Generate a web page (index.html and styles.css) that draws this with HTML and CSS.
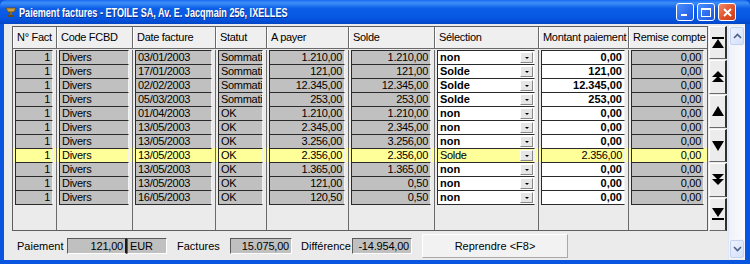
FILE: index.html
```html
<!DOCTYPE html>
<html lang="fr">
<head>
    <meta charset="UTF-8">
    <title>Paiement factures</title>
    <link rel="stylesheet" href="styles.css">
</head>
<body>
<div class="window">
    <div class="titlebar">
        <svg class="app-icon" width="12" height="12" viewBox="0 0 12 12">
            <path d="M1 2 H11 L9 6 H3 Z" fill="#c8a040" stroke="#6b4a10" stroke-width="0.8"/>
            <rect x="5" y="6" width="2" height="3" fill="#8a6420"/>
            <rect x="3" y="9" width="6" height="2" fill="#6b4a10"/>
        </svg>
        <div class="title-wrap"><span class="title">Paiement factures - ETOILE SA, Av. E. Jacqmain 256, IXELLES</span></div>
        <div class="win-btns">
            <div class="win-btn"><span class="min-glyph"></span></div>
            <div class="win-btn"><span class="max-glyph"></span></div>
            <div class="win-btn close">
                <svg width="11" height="11" viewBox="0 0 11 11"><path d="M2 2 L9 9 M9 2 L2 9" stroke="#fff" stroke-width="2"/></svg>
            </div>
        </div>
    </div>

    <div class="client">
        <div class="main">
            <div class="grid-area">
                <div class="grid">
                    <div class="row head">
                        <div class="col">N° Fact</div>
                        <div class="col">Code FCBD</div>
                        <div class="col">Date facture</div>
                        <div class="col">Statut</div>
                        <div class="col">A payer</div>
                        <div class="col">Solde</div>
                        <div class="col">Sélection</div>
                        <div class="col">Montant paiement</div>
                        <div class="col">Remise compte</div>
                    </div>

                    <div class="row">
                        <div class="col"><div class="cell num">1</div></div>
                        <div class="col"><div class="cell">Divers</div></div>
                        <div class="col"><div class="cell">03/01/2003</div></div>
                        <div class="col"><div class="cell">Sommation</div></div>
                        <div class="col"><div class="cell num">1.210,00</div></div>
                        <div class="col"><div class="cell num">1.210,00</div></div>
                        <div class="col"><div class="cell select"><span>non</span><i class="drop"></i></div></div>
                        <div class="col"><div class="cell edit num">0,00</div></div>
                        <div class="col"><div class="cell num">0,00</div></div>
                    </div>
                    <div class="row">
                        <div class="col"><div class="cell num">1</div></div>
                        <div class="col"><div class="cell">Divers</div></div>
                        <div class="col"><div class="cell">17/01/2003</div></div>
                        <div class="col"><div class="cell">Sommation</div></div>
                        <div class="col"><div class="cell num">121,00</div></div>
                        <div class="col"><div class="cell num">121,00</div></div>
                        <div class="col"><div class="cell select"><span>Solde</span><i class="drop"></i></div></div>
                        <div class="col"><div class="cell edit num">121,00</div></div>
                        <div class="col"><div class="cell num">0,00</div></div>
                    </div>
                    <div class="row">
                        <div class="col"><div class="cell num">1</div></div>
                        <div class="col"><div class="cell">Divers</div></div>
                        <div class="col"><div class="cell">02/02/2003</div></div>
                        <div class="col"><div class="cell">Sommation</div></div>
                        <div class="col"><div class="cell num">12.345,00</div></div>
                        <div class="col"><div class="cell num">12.345,00</div></div>
                        <div class="col"><div class="cell select"><span>Solde</span><i class="drop"></i></div></div>
                        <div class="col"><div class="cell edit num">12.345,00</div></div>
                        <div class="col"><div class="cell num">0,00</div></div>
                    </div>
                    <div class="row">
                        <div class="col"><div class="cell num">1</div></div>
                        <div class="col"><div class="cell">Divers</div></div>
                        <div class="col"><div class="cell">05/03/2003</div></div>
                        <div class="col"><div class="cell">Sommation</div></div>
                        <div class="col"><div class="cell num">253,00</div></div>
                        <div class="col"><div class="cell num">253,00</div></div>
                        <div class="col"><div class="cell select"><span>Solde</span><i class="drop"></i></div></div>
                        <div class="col"><div class="cell edit num">253,00</div></div>
                        <div class="col"><div class="cell num">0,00</div></div>
                    </div>
                    <div class="row">
                        <div class="col"><div class="cell num">1</div></div>
                        <div class="col"><div class="cell">Divers</div></div>
                        <div class="col"><div class="cell">01/04/2003</div></div>
                        <div class="col"><div class="cell">OK</div></div>
                        <div class="col"><div class="cell num">1.210,00</div></div>
                        <div class="col"><div class="cell num">1.210,00</div></div>
                        <div class="col"><div class="cell select"><span>non</span><i class="drop"></i></div></div>
                        <div class="col"><div class="cell edit num">0,00</div></div>
                        <div class="col"><div class="cell num">0,00</div></div>
                    </div>
                    <div class="row">
                        <div class="col"><div class="cell num">1</div></div>
                        <div class="col"><div class="cell">Divers</div></div>
                        <div class="col"><div class="cell">13/05/2003</div></div>
                        <div class="col"><div class="cell">OK</div></div>
                        <div class="col"><div class="cell num">2.345,00</div></div>
                        <div class="col"><div class="cell num">2.345,00</div></div>
                        <div class="col"><div class="cell select"><span>non</span><i class="drop"></i></div></div>
                        <div class="col"><div class="cell edit num">0,00</div></div>
                        <div class="col"><div class="cell num">0,00</div></div>
                    </div>
                    <div class="row">
                        <div class="col"><div class="cell num">1</div></div>
                        <div class="col"><div class="cell">Divers</div></div>
                        <div class="col"><div class="cell">13/05/2003</div></div>
                        <div class="col"><div class="cell">OK</div></div>
                        <div class="col"><div class="cell num">3.256,00</div></div>
                        <div class="col"><div class="cell num">3.256,00</div></div>
                        <div class="col"><div class="cell select"><span>non</span><i class="drop"></i></div></div>
                        <div class="col"><div class="cell edit num">0,00</div></div>
                        <div class="col"><div class="cell num">0,00</div></div>
                    </div>
                    <div class="row current">
                        <div class="col"><div class="cell num">1</div></div>
                        <div class="col"><div class="cell">Divers</div></div>
                        <div class="col"><div class="cell">13/05/2003</div></div>
                        <div class="col"><div class="cell">OK</div></div>
                        <div class="col"><div class="cell num">2.356,00</div></div>
                        <div class="col"><div class="cell num">2.356,00</div></div>
                        <div class="col"><div class="cell select"><span>Solde</span><i class="drop"></i></div></div>
                        <div class="col"><div class="cell edit num">2.356,00</div></div>
                        <div class="col"><div class="cell num">0,00</div></div>
                    </div>
                    <div class="row">
                        <div class="col"><div class="cell num">1</div></div>
                        <div class="col"><div class="cell">Divers</div></div>
                        <div class="col"><div class="cell">13/05/2003</div></div>
                        <div class="col"><div class="cell">OK</div></div>
                        <div class="col"><div class="cell num">1.365,00</div></div>
                        <div class="col"><div class="cell num">1.365,00</div></div>
                        <div class="col"><div class="cell select"><span>non</span><i class="drop"></i></div></div>
                        <div class="col"><div class="cell edit num">0,00</div></div>
                        <div class="col"><div class="cell num">0,00</div></div>
                    </div>
                    <div class="row">
                        <div class="col"><div class="cell num">1</div></div>
                        <div class="col"><div class="cell">Divers</div></div>
                        <div class="col"><div class="cell">13/05/2003</div></div>
                        <div class="col"><div class="cell">OK</div></div>
                        <div class="col"><div class="cell num">121,00</div></div>
                        <div class="col"><div class="cell num">0,50</div></div>
                        <div class="col"><div class="cell select"><span>non</span><i class="drop"></i></div></div>
                        <div class="col"><div class="cell edit num">0,00</div></div>
                        <div class="col"><div class="cell num">0,00</div></div>
                    </div>
                    <div class="row">
                        <div class="col"><div class="cell num">1</div></div>
                        <div class="col"><div class="cell">Divers</div></div>
                        <div class="col"><div class="cell">16/05/2003</div></div>
                        <div class="col"><div class="cell">OK</div></div>
                        <div class="col"><div class="cell num">120,50</div></div>
                        <div class="col"><div class="cell num">0,50</div></div>
                        <div class="col"><div class="cell select"><span>non</span><i class="drop"></i></div></div>
                        <div class="col"><div class="cell edit num">0,00</div></div>
                        <div class="col"><div class="cell num">0,00</div></div>
                    </div>

                    <div class="row filler">
                        <div class="col"></div><div class="col"></div><div class="col"></div>
                        <div class="col"></div><div class="col"></div><div class="col"></div>
                        <div class="col"></div><div class="col"></div><div class="col"></div>
                    </div>
                </div>

                <div class="nav">
                    <div class="nav-btn">
                        <svg width="12" height="12" viewBox="0 0 12 12"><rect x="0" y="0" width="12" height="2"/><path d="M6 2 L12 11 H0 Z"/></svg>
                    </div>
                    <div class="nav-btn">
                        <svg width="12" height="12" viewBox="0 0 12 12"><path d="M6 0 L12 6 H0 Z"/><path d="M6 5 L12 11 H0 Z"/></svg>
                    </div>
                    <div class="nav-btn">
                        <svg width="12" height="10" viewBox="0 0 12 10"><path d="M6 0 L12 10 H0 Z"/></svg>
                    </div>
                    <div class="nav-btn">
                        <svg width="12" height="10" viewBox="0 0 12 10"><path d="M0 0 H12 L6 10 Z"/></svg>
                    </div>
                    <div class="nav-btn">
                        <svg width="12" height="12" viewBox="0 0 12 12"><path d="M0 0 H12 L6 6 Z"/><path d="M0 5 H12 L6 11 Z"/></svg>
                    </div>
                    <div class="nav-btn">
                        <svg width="12" height="12" viewBox="0 0 12 12"><path d="M0 0 H12 L6 9 Z"/><rect x="0" y="10" width="12" height="2"/></svg>
                    </div>
                </div>
            </div>

            <div class="footer">
                <span class="label lbl-paiement">Paiement</span>
                <div class="box num w-paiement">121,00</div>
                <div class="box w-eur">EUR</div>
                <span class="label lbl-factures">Factures</span>
                <div class="box num w-factures">15.075,00</div>
                <span class="label lbl-diff">Différence</span>
                <div class="box num w-diff">-14.954,00</div>
                <button class="action-btn">Reprendre &lt;F8&gt;</button>
            </div>
        </div>

        <div class="vscroll">
            <div class="sb-btn">
                <svg width="9" height="6" viewBox="0 0 9 6"><path d="M1 5 L4.5 1.5 L8 5" fill="none" stroke="#4d6185" stroke-width="1.6"/></svg>
            </div>
            <div class="sb-track"></div>
            <div class="sb-btn">
                <svg width="9" height="6" viewBox="0 0 9 6"><path d="M1 1 L4.5 4.5 L8 1" fill="none" stroke="#4d6185" stroke-width="1.6"/></svg>
            </div>
        </div>
    </div>
</div>
</body>
</html>
```

FILE: styles.css
```css
body {
    margin: 0;
    font-family: 'Liberation Sans', Arial, sans-serif;
    font-size: 11px;
    color: #000;
}
.window {
    width: 750px;
    height: 264px;
    box-sizing: border-box;
    display: flex;
    flex-direction: column;
    background: #0a55e0;
    padding: 0 5px 4px 4px;
}
.titlebar {
    height: 24px;
    margin: 0 -5px 0 -4px;
    padding: 0 14px 0 5px;
    display: flex;
    align-items: center;
    background: linear-gradient(#1a6af2 0%, #3d8ff8 12%, #0c5ee8 35%, #0656e2 75%, #0447c8 100%);
    border-radius: 6px 6px 0 0;
}
.app-icon {
    flex: none;
    margin-right: 2px;
}
.title-wrap {
    flex: 1;
    overflow: hidden;
}
.title {
    display: inline-block;
    color: #fff;
    font-weight: bold;
    font-size: 13px;
    text-shadow: 1px 1px 0 #0a2a8a;
    white-space: nowrap;
    transform: scaleX(0.7);
    transform-origin: left center;
}
.win-btns {
    display: flex;
    gap: 3px;
}
.win-btn {
    width: 16px;
    height: 16px;
    border: 1px solid #fff;
    border-radius: 3px;
    background: linear-gradient(135deg, #4d8ffc, #2b6cf0 60%, #1c56d8);
    display: flex;
    align-items: flex-end;
    justify-content: center;
}
.win-btn.close {
    background: linear-gradient(135deg, #f08a6a, #e0502a 55%, #c83a18);
    align-items: center;
}
.min-glyph {
    width: 6px;
    height: 2px;
    background: #fff;
    margin-bottom: 4px;
    margin-right: 3px;
}
.max-glyph {
    width: 8px;
    height: 6px;
    border: 1px solid #fff;
    border-top-width: 2px;
    margin-bottom: 3px;
}

.client {
    flex: 1;
    display: flex;
    background: #ebebeb;
    min-height: 0;
}
.main {
    width: 724px;
    padding: 2px 1px 0 8px;
    box-sizing: border-box;
    display: flex;
    flex-direction: column;
}
.grid-area {
    display: flex;
    height: 205px;
}
.grid {
    width: 696px;
    box-sizing: border-box;
    border: 1px solid #5f5f5f;
    display: flex;
    flex-direction: column;
    overflow: hidden;
}
.row {
    display: grid;
    grid-template-columns: 44px 76px 83px 51px 82px 86px 104px 90px 78px;
    height: 14px;
    flex: none;
}
.col {
    border-right: 1px solid #6a6a6a;
    padding: 0 3px 0 2px;
    min-width: 0;
}
.col:last-child {
    border-right: 0;
}
.head {
    height: 21px;
    border-bottom: 1px solid #6a6a6a;
    background: #efefef;
}
.head .col {
    padding: 0 3px 0 4px;
    line-height: 20px;
    letter-spacing: -0.3px;
    white-space: nowrap;
    overflow: hidden;
    box-shadow: inset 1px 0 #fff;
}
.head + .row {
    margin-top: 1px;
}
.cell {
    height: 15px;
    box-sizing: border-box;
    border: 1px solid #2a2a2a;
    border-right-color: #f2f2f2;
    background: #c0c0c0;
    line-height: 13px;
    padding: 0 2px;
    letter-spacing: -0.3px;
    white-space: nowrap;
    overflow: hidden;
}
.num {
    text-align: right;
}
.cell.edit,
.cell.select {
    background: #fff;
    font-weight: bold;
    letter-spacing: 0;
}
.cell.select {
    display: flex;
    justify-content: space-between;
    padding-right: 0;
}
.drop {
    width: 13px;
    height: 11px;
    margin-right: 1px;
    background: #e6e6e6;
    border: 1px solid #fff;
    border-right-color: #888;
    border-bottom-color: #888;
    box-sizing: border-box;
    display: flex;
    align-items: center;
    justify-content: center;
    align-self: center;
}
.drop::after {
    content: "";
    border-left: 2px solid transparent;
    border-right: 2px solid transparent;
    border-top: 2px solid #000;
}
.current {
    background: #ffff99;
}
.current .cell,
.current .cell.edit,
.current .cell.select {
    background: #ffff99;
    font-weight: normal;
    letter-spacing: -0.3px;
}
.filler {
    flex: 1;
    height: auto;
}

.nav {
    width: 18px;
    margin-left: 1px;
    display: flex;
    flex-direction: column;
    gap: 1px;
}
.nav-btn {
    flex: 1;
    background: #ececec;
    border: 1px solid #fff;
    border-right: 2px solid #303030;
    border-bottom: 1px solid #6a6a6a;
    display: flex;
    align-items: center;
    justify-content: center;
}
.nav-btn svg {
    fill: #000;
}

.footer {
    flex: 1;
    display: flex;
    align-items: center;
}
.label {
    white-space: nowrap;
}
.lbl-paiement { margin-left: 5px; width: 50px; }
.lbl-factures { margin-left: 10px; width: 53px; }
.lbl-diff { margin-left: 9px; width: 51px; }
.box {
    height: 16px;
    box-sizing: border-box;
    background: #c0c0c0;
    border: 1px solid #5a5a5a;
    border-right-color: #fff;
    border-bottom-color: #fff;
    line-height: 14px;
    padding: 0 2px;
    letter-spacing: -0.2px;
}
.w-paiement { width: 60px; border-right: 2px solid #1a1a1a; }
.w-eur { width: 40px; }
.w-factures { width: 62px; }
.w-diff { width: 60px; }
.action-btn {
    margin-left: 10px;
    width: 146px;
    height: 24px;
    font-family: inherit;
    font-size: 11px;
    background: #f2f2f2;
    border: 1px solid #fff;
    border-right-color: #a8a8a8;
    border-bottom-color: #a8a8a8;
    padding: 0;
}

.vscroll {
    width: 17px;
    margin: 2px 0 1px 0;
    display: flex;
    flex-direction: column;
    background: #f3f5fb;
    border-left: 1px solid #dfe6f4;
    box-sizing: border-box;
}
.sb-btn {
    height: 16px;
    margin: 1px;
    border: 1px solid #c4d2f0;
    border-radius: 2px;
    background: linear-gradient(135deg, #eef3ff, #d4e0fb);
    display: flex;
    align-items: center;
    justify-content: center;
}
.sb-track {
    flex: 1;
    background: linear-gradient(90deg, #eef1f8, #fbfcfe);
}
```
